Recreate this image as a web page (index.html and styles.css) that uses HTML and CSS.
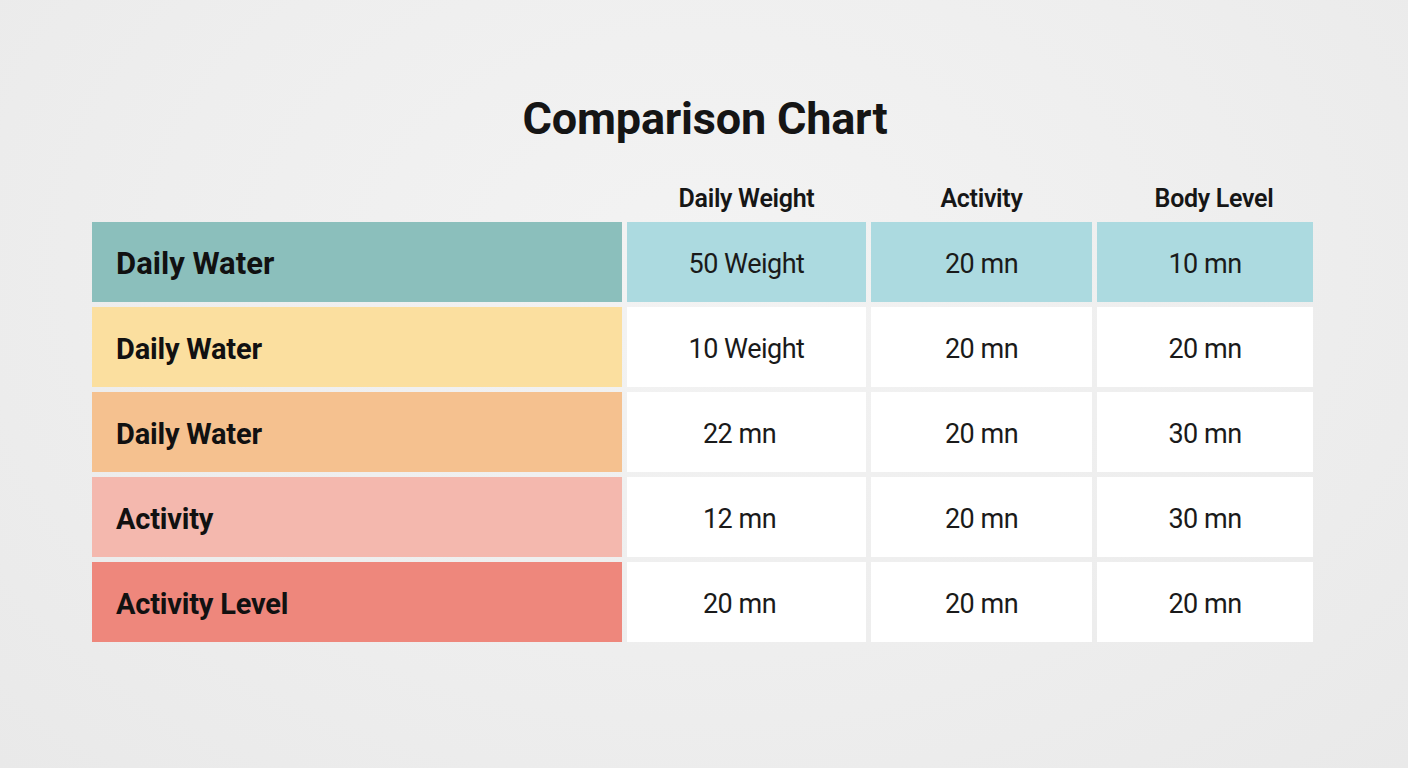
FILE: index.html
```html
<!DOCTYPE html>
<html lang="en">
<head>
<meta charset="utf-8">
<title>Comparison Chart</title>
<link rel="stylesheet" href="styles.css">
</head>
<body>
<main class="page">
  <h1 class="title">Comparison Chart</h1>
  <div class="chart">
    <div class="head-blank"></div>
    <div class="head">Daily Weight</div>
    <div class="head">Activity</div>
    <div class="head head-last">Body Level</div>

    <div class="label label-teal label-lg">Daily Water</div>
    <div class="cell cell-blue">50 Weight</div>
    <div class="cell cell-blue">20 mn</div>
    <div class="cell cell-blue">10 mn</div>

    <div class="label label-yellow">Daily Water</div>
    <div class="cell">10 Weight</div>
    <div class="cell">20 mn</div>
    <div class="cell">20 mn</div>

    <div class="label label-orange">Daily Water</div>
    <div class="cell cell-shift">22 mn</div>
    <div class="cell">20 mn</div>
    <div class="cell">30 mn</div>

    <div class="label label-pink">Activity</div>
    <div class="cell cell-shift">12 mn</div>
    <div class="cell">20 mn</div>
    <div class="cell">30 mn</div>

    <div class="label label-red">Activity Level</div>
    <div class="cell cell-shift">20 mn</div>
    <div class="cell">20 mn</div>
    <div class="cell">20 mn</div>
  </div>
</main>
</body>
</html>
```

FILE: styles.css
```css
html, body {
  margin: 0;
  padding: 0;
}

body {
  width: 1408px;
  height: 768px;
  overflow: hidden;
  background: radial-gradient(ellipse at 50% 35%, #f3f3f3 0%, #eeeeee 55%, #e9e9e9 100%);
  font-family: Roboto, "Liberation Sans", Arial, sans-serif;
  color: #141414;
}

.page {
  display: flex;
  flex-direction: column;
  align-items: flex-start;
  padding: 92px 0 0 92px;
}

.title {
  align-self: stretch;
  margin: 0 92px 31px 0;
  padding-left: 2px;
  text-align: center;
  font-size: 45px;
  line-height: 54px;
  font-weight: 700;
  letter-spacing: -0.2px;
  color: #151515;
}

.chart {
  display: grid;
  grid-template-columns: 530px 239px 221px 216px;
  grid-template-rows: 40px repeat(5, 80px);
  column-gap: 5px;
  row-gap: 5px;
}

.head {
  display: flex;
  align-items: center;
  justify-content: center;
  padding-top: 2px;
  font-size: 25px;
  font-weight: 600;
  letter-spacing: -0.3px;
  color: #161616;
}

.head-last {
  padding-left: 18px;
}

.label {
  display: flex;
  align-items: center;
  padding: 3px 0 0 24px;
  font-size: 29px;
  font-weight: 700;
  letter-spacing: -0.2px;
  color: #111111;
}

.label-lg {
  font-size: 31px;
  letter-spacing: 0;
  padding-top: 2px;
}

.label-teal { background: #8bbfbc; }
.label-yellow { background: #fbdf9f; }
.label-orange { background: #f5c18f; }
.label-pink { background: #f4b8ae; }
.label-red { background: #ee877c; }

.cell {
  display: flex;
  align-items: center;
  justify-content: center;
  padding-top: 3px;
  background: #ffffff;
  font-size: 27px;
  font-weight: 400;
  letter-spacing: -0.5px;
  color: #1a1a1a;
}

.cell-blue {
  background: #acdae0;
}

.cell-shift {
  padding-right: 14px;
}
```
